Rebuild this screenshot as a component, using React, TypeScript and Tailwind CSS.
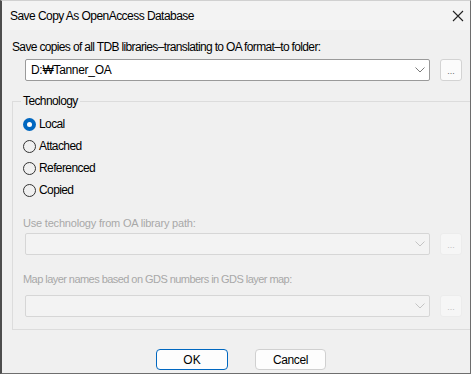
import React from "react";

const font = { fontFamily: '"Liberation Sans", Arial, sans-serif' };

function Chevron({ color }: { color: string }) {
  return (
    <svg width="10" height="6" viewBox="0 0 10 6" fill="none">
      <path d="M0.5 0.5 L5 5 L9.5 0.5" stroke={color} strokeWidth="1" />
    </svg>
  );
}

function Combo({ text, disabled }: { text?: string; disabled?: boolean }) {
  return (
    <div className="flex items-center gap-[10px]">
      <div
        className={
          disabled
            ? "w-[405px] h-[22px] flex items-center border border-[#d6d6d6] rounded-[2px] bg-[#f3f3f3] pl-[5px] pr-[4px]"
            : "w-[405px] h-[22px] flex items-center border border-[#9a9a9a] rounded-[2px] bg-white pl-[5px] pr-[4px]"
        }
      >
        <span className="flex-1 text-[12px] text-black tracking-[-0.3px]">{text}</span>
        <Chevron color={disabled ? "#c4c4c4" : "#7a7a7a"} />
      </div>
      <div
        className={
          disabled
            ? "w-[22px] h-[22px] rounded-[3px] bg-[#f6f6f6] border border-[#ececec] flex items-center justify-center text-[9px] text-[#c0c0c0] leading-none pt-[3px]"
            : "w-[22px] h-[22px] rounded-[3px] bg-[#fbfbfb] border border-[#d3d3d3] flex items-center justify-center text-[9px] text-[#6a6a6a] leading-none pt-[3px]"
        }
      >
        ...
      </div>
    </div>
  );
}

function Radio({ label, checked }: { label: string; checked?: boolean }) {
  return (
    <div className="h-[22px] flex items-center gap-[3px]">
      {checked ? (
        <span className="w-[13px] h-[13px] rounded-full bg-[#0067c0] flex items-center justify-center">
          <span className="w-[5px] h-[5px] rounded-full bg-white" />
        </span>
      ) : (
        <span className="w-[13px] h-[13px] rounded-full border border-[#333] bg-transparent" />
      )}
      <span className="text-[12px] text-black tracking-[-0.6px]">{label}</span>
    </div>
  );
}

export default function App() {
  return (
    <div className="w-[473px] h-[376px] bg-white" style={font}>
      <div className="w-[471px] h-[374px] border-l-2 border-r border-b border-t border-l-[#4d4d4d] border-r-[#6e6e6e] border-b-[#6e6e6e] border-t-[#d0d0d0] flex flex-col bg-[#f0f0f0] overflow-hidden">
        <div className="h-[29px] bg-[#f3f3f3] flex items-center pl-[8px] pr-[4px] shrink-0">
          <span className="flex-1 text-[12px] text-black tracking-[-0.55px]">Save Copy As OpenAccess Database</span>
          <svg width="12" height="12" viewBox="0 0 12 12" className="mr-[2px]">
            <path d="M1 1 L11 11 M11 1 L1 11" stroke="#222" strokeWidth="1.1" />
          </svg>
        </div>
        <div className="flex flex-col pl-[10px]">
          <div className="mt-[9px] h-[16px] leading-[16px] text-[12px] text-black tracking-[-0.65px]">
            Save copies of all TDB libraries–translating to OA format–to folder:
          </div>
          <div className="mt-[4px] pl-[13px]">
            <Combo text="D:₩Tanner_OA" />
          </div>
          <div className="relative mt-[20px] border border-[#dcdcdc] border-r-0 pl-[10px] pt-[11px] pb-[12px]">
            <span className="absolute left-[8px] top-[-9px] bg-[#f0f0f0] px-[2px] text-[12px] leading-[16px] text-black tracking-[-0.6px]">
              Technology
            </span>
            <Radio label="Local" checked />
            <Radio label="Attached" />
            <Radio label="Referenced" />
            <Radio label="Copied" />
            <div className="mt-[14px] h-[16px] leading-[16px] text-[11px] text-[#a8a8a8] tracking-[-0.2px]">
              Use technology from OA library path:
            </div>
            <div className="mt-[2px] pl-[2px]">
              <Combo disabled />
            </div>
            <div className="mt-[16px] h-[16px] leading-[16px] text-[11px] text-[#a8a8a8] tracking-[-0.55px]">
              Map layer names based on GDS numbers in GDS layer map:
            </div>
            <div className="mt-[8px] pl-[2px]">
              <Combo disabled />
            </div>
          </div>
        </div>
        <div className="flex justify-center gap-[27px] mt-[19px] pl-[10px]">
          <div className="w-[72px] h-[21px] rounded-[4px] border border-[#0067c0] bg-[#fdfdfd] flex items-center justify-center text-[12px] text-black">
            OK
          </div>
          <div className="w-[71px] h-[21px] rounded-[4px] border border-[#d0d0d0] bg-[#fdfdfd] flex items-center justify-center text-[12px] text-black tracking-[-0.4px]">
            Cancel
          </div>
        </div>
      </div>
    </div>
  );
}
